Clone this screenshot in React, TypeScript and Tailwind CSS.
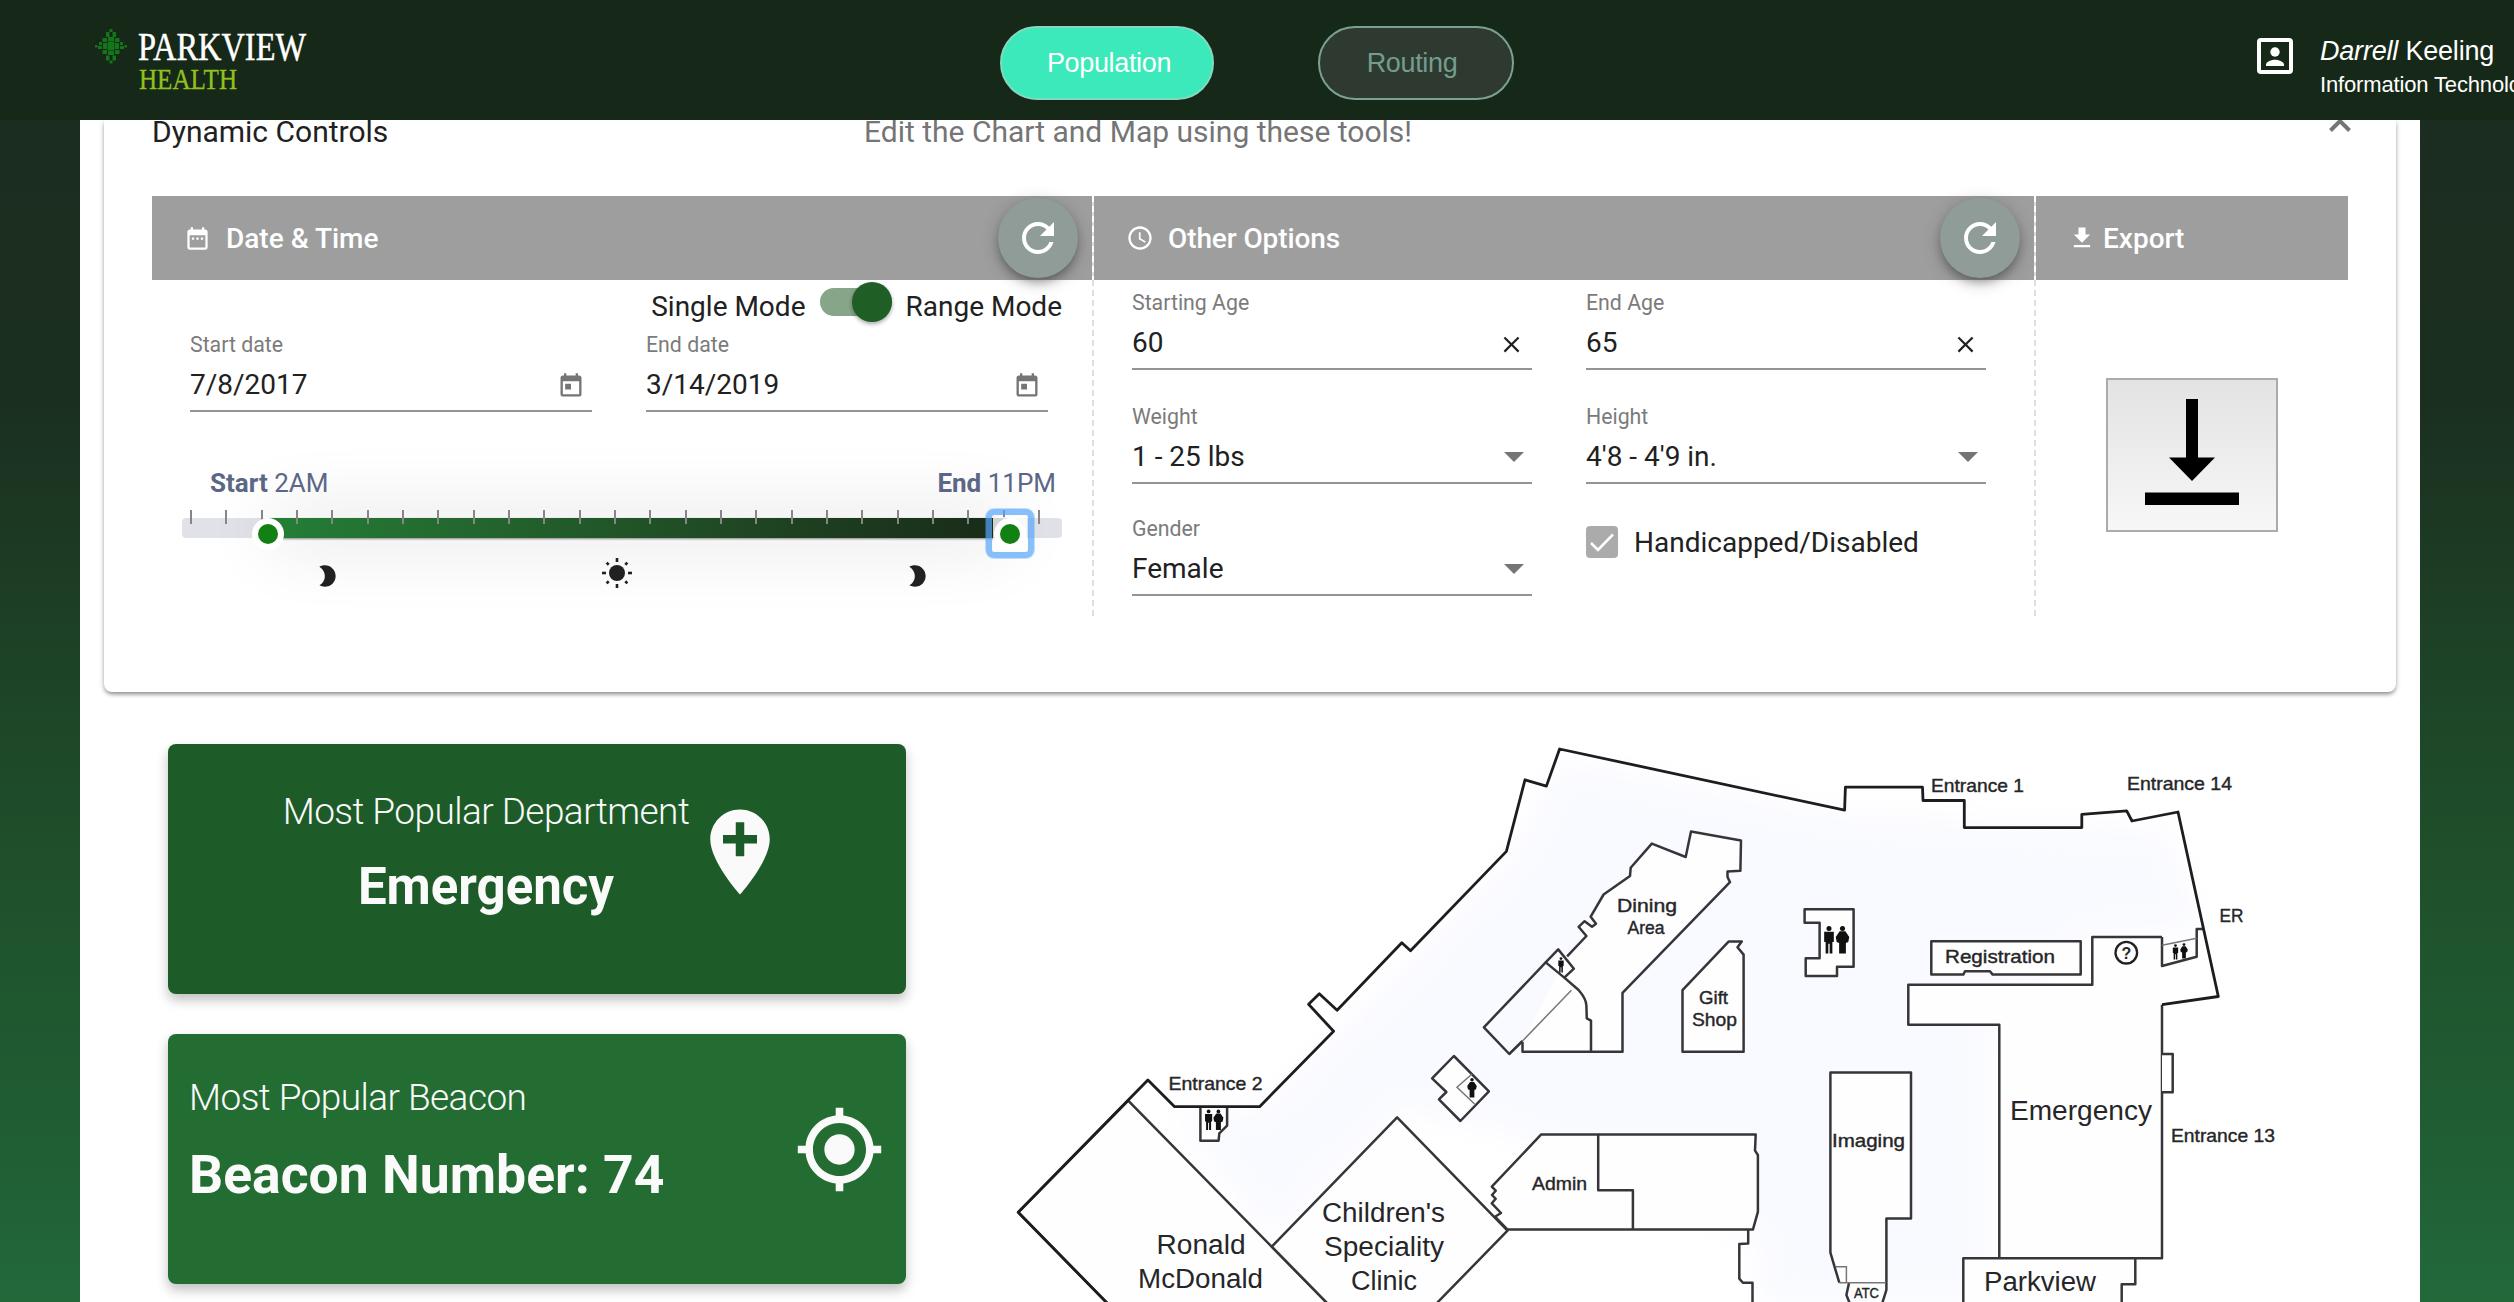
import React from "react";

const ROBOTO = "font-[Roboto,sans-serif]";
const ARIAL = "font-['Liberation_Sans',Arial,sans-serif]";

type IconProps = { d: string; className?: string };
const Icon = ({ d, className }: IconProps) => (
  <svg viewBox="0 0 24 24" fill="currentColor" className={className}>
    <path d={d} />
  </svg>
);

const P = {
  refresh:
    "M17.65 6.35C16.2 4.9 14.21 4 12 4c-4.42 0-7.99 3.58-7.99 8s3.57 8 7.99 8c3.73 0 6.84-2.55 7.73-6h-2.08c-.82 2.33-3.04 4-5.65 4-3.31 0-6-2.69-6-6s2.69-6 6-6c1.66 0 3.14.69 4.22 1.78L13 11h7V4l-2.35 2.35z",
  dateRange:
    "M9 11H7v2h2v-2zm4 0h-2v2h2v-2zm4 0h-2v2h2v-2zm2-7h-1V2h-2v2H8V2H6v2H5c-1.11 0-1.99.9-1.99 2L3 20c0 1.1.89 2 2 2h14c1.1 0 2-.9 2-2V6c0-1.1-.9-2-2-2zm0 16H5V9h14v11z",
  clock:
    "M11.99 2C6.47 2 2 6.48 2 12s4.47 10 9.99 10C17.52 22 22 17.52 22 12S17.52 2 11.99 2zM12 20c-4.42 0-8-3.58-8-8s3.58-8 8-8 8 3.58 8 8-3.58 8-8 8zm.5-13H11v6l5.25 3.15.75-1.23-4.5-2.67z",
  download: "M19 9h-4V3H9v6H5l7 7 7-7zM5 18v2h14v-2H5z",
  today:
    "M19 3h-1V1h-2v2H8V1H6v2H5c-1.11 0-1.99.9-1.99 2L3 19c0 1.1.89 2 2 2h14c1.1 0 2-.9 2-2V5c0-1.1-.9-2-2-2zm0 16H5V8h14v11zM7 10h5v5H7z",
  moon: "M10 2c-1.82 0-3.53.5-5 1.35C7.99 5.08 10 8.3 10 12s-2.01 6.92-5 8.65C6.47 21.5 8.18 22 10 22c5.52 0 10-4.48 10-10S15.52 2 10 2z",
  close:
    "M19 6.41L17.59 5 12 10.59 6.41 5 5 6.41 10.59 12 5 17.59 6.41 19 12 13.41 17.59 19 19 17.59 13.41 12z",
  addLocation:
    "M12 2C8.14 2 5 5.14 5 9c0 5.25 7 13 7 13s7-7.75 7-13c0-3.86-3.14-7-7-7zm4 8h-3v3h-2v-3H8V8h3V5h2v3h3v2z",
  myLocation:
    "M12 8c-2.21 0-4 1.79-4 4s1.79 4 4 4 4-1.79 4-4-1.79-4-4-4zm8.94 3c-.46-4.17-3.77-7.48-7.94-7.94V1h-2v2.06C6.83 3.52 3.52 6.83 3.06 11H1v2h2.06c.46 4.17 3.77 7.48 7.94 7.94V23h2v-2.06c4.17-.46 7.48-3.77 7.94-7.94H23v-2h-2.06zM12 19c-3.87 0-7-3.13-7-7s3.13-7 7-7 7 3.13 7 7-3.13 7-7 7z",
};

const LOGO_TILES: [number, number, number, number][] = [
  [14.5, 0, 3, 3], [11, 3, 3.5, 5], [17.5, 3, 3.5, 5],
  [7.5, 9, 4.5, 4], [13, 8, 6, 4], [20, 9, 4.5, 4],
  [4, 13, 3, 3], [8, 14, 4, 6], [12.5, 12.5, 7, 9], [20, 14, 4, 6], [25, 13, 3, 3],
  [0, 16, 2.5, 2.5], [3, 17, 4, 3], [25, 17, 4, 3], [29.5, 16, 2.5, 2.5],
  [7.5, 21, 4.5, 4], [13, 22, 6, 4], [20, 21, 4.5, 4],
  [11, 26.5, 3.5, 5], [17.5, 26.5, 3.5, 5], [14.5, 31.5, 3, 3],
];

const Logo = () => (
  <svg width="220" height="110" viewBox="95 6 220 110" className="shrink-0">
    <g fill="#14761b" transform="translate(95 29)">
      {LOGO_TILES.map(([x, y, w, h], i) => (
        <rect key={i} x={x} y={y} width={w} height={h} rx="0.6" />
      ))}
    </g>
    <g fontFamily="'Liberation Serif', serif">
      <text x="138" y="60" fontSize="40" fill="#fff" stroke="#fff" strokeWidth="0.5" textLength="168" lengthAdjust="spacingAndGlyphs">PARKVIEW</text>
      <text x="139" y="89" fontSize="29" fill="#93c01f" stroke="#93c01f" strokeWidth="0.3" textLength="98" lengthAdjust="spacingAndGlyphs">HEALTH</text>
    </g>
  </svg>
);

const Header = () => (
  <header className={`relative z-10 flex h-[120px] shrink-0 bg-[#162817] ${ARIAL}`}>
    <div className="w-[1000px] shrink-0 pl-[95px] pt-[6px]">
      <Logo />
    </div>
    <nav className="flex w-[1257px] shrink-0 gap-[104px] pt-[26px] text-[27px] tracking-[-0.35px]">
      <button className="h-[74px] w-[214px] rounded-[37px] border-2 border-[#82d9bf] bg-[#3be9ba] pl-1 text-white">
        Population
      </button>
      <button className="h-[74px] w-[196px] rounded-[37px] border-2 border-[#7aa294] bg-[#2e3a2f] pr-2 text-[#739d8e]">
        Routing
      </button>
    </nav>
    <div className="flex w-[400px] shrink-0 gap-[27px] whitespace-nowrap text-white">
      <svg viewBox="0 0 36 36" className="mt-[38px] size-9 shrink-0">
        <rect x="2" y="2" width="32" height="32" rx="2" fill="none" stroke="#fff" strokeWidth="4" />
        <circle cx="18" cy="14" r="4.7" fill="#fff" />
        <path d="M9 28v-1.500c0-3 6-4.700 9-4.700s9 1.700 9 4.700V28z" fill="#fff" />
      </svg>
      <div className="flex flex-col pt-[34px]">
        <span className="text-[27px] leading-[34px] tracking-[-0.2px]">
          <em>Darrell</em> Keeling
        </span>
        <span className="mt-px text-[22px] leading-[32px] tracking-[-0.15px]">Information Technology</span>
      </div>
    </div>
  </header>
);

const Fab = () => (
  <button className="flex size-20 items-center justify-center rounded-full bg-[#8f9c97] text-white shadow-[0_6px_10px_-2px_rgba(0,0,0,0.3),0_4px_18px_rgba(0,0,0,0.22)]">
    <Icon d={P.refresh} className="size-12" />
  </button>
);

const Divider = () => (
  <div className="absolute inset-y-0 left-0 w-[2px] bg-[repeating-linear-gradient(to_top,#dfdfdf_0_6px,transparent_6px_10px)]" />
);
const DividerTop = () => (
  <div className="absolute left-0 top-0 h-[84px] w-[2px] bg-[repeating-linear-gradient(to_bottom,#fff_0_6px,#ddd_6px_10px)]" />
);

const Field = ({ label, value, children }: { label: string; value: string; children?: React.ReactNode }) => (
  <div className="border-b-2 border-[#949494] pb-[2px]">
    <div className="h-[34px] text-[21.300px] leading-[34px] text-[#7b7b7b]">{label}</div>
    <div className="flex h-[46px] items-center justify-between text-[28px] leading-[46px] text-[#212121]">
      <span>{value}</span>
      {children}
    </div>
  </div>
);

const Caret = () => (
  <svg viewBox="0 0 20 10" className="mr-2 h-[10px] w-5 fill-[#757575]">
    <path d="M0 0h20L10 10z" />
  </svg>
);
const CloseIcon = () => <Icon d={P.close} className="mr-[7px] mt-[2px] size-[27px]" />;
const Today = () => <Icon d={P.today} className="mr-[7px] mt-[2px] size-7 text-[#757575]" />;

const Knob = () => (
  <div className="flex size-8 items-center justify-center rounded-full bg-white">
    <div className="size-5 rounded-full bg-[#128012]" />
  </div>
);

const TICKS = Array.from({ length: 25 }, (_, i) => 8 + Math.round(i * 35.33));

const Slider = () => (
  <div className="mt-[55px]">
    <div className="relative z-10 flex justify-between pl-[28px] pr-[6px] text-[26px] leading-8 text-[#5b6785]">
      <span><b>Start</b> 2AM</span>
      <span><b>End</b> 11PM</span>
    </div>
    <div className="relative mt-[19px] h-5 rounded bg-[#e1e2e8]">
      <div className="absolute left-[86px] top-0 h-5 w-[742px] bg-gradient-to-r from-[#247f36] to-[#182a18] shadow-[0_1px_2px_rgba(0,0,0,0.45),0_0_70px_rgba(0,0,0,0.2)]" />
      {TICKS.map((t) => (
        <div key={t} className="absolute -top-2 h-[14px] w-[2px] bg-[#868686]" style={{ left: t }} />
      ))}
      <div className="absolute left-[70px] top-0">
        <Knob />
      </div>
      <div className="absolute left-[812px] top-0">
        <div className="absolute left-[-1px] top-[-1px] h-[33px] w-[34px] bg-white/80" />
        <div className="relative"><Knob /></div>
        <div className="absolute left-[-8px] top-[-9px] h-[49px] w-12 rounded-lg border-[6px] border-[#55a5fa]/70 shadow-[0_0_0_1px_rgba(85,165,250,0.35)]" />
      </div>
    </div>
    <div className="relative flex items-center pl-[132px] pt-[19px] text-[#212121]">
      <Icon d={P.moon} className="mt-[6px] size-[26px]" />
      <svg viewBox="-16 -16 32 32" className="ml-[261px] size-8">
        <circle r="8" fill="#212121" />
        {[0, 45, 90, 135, 180, 225, 270, 315].map((a) => (
          <rect key={a} x="-1.3" y={a % 90 ? -14.7 : -15} width="2.6" height={a % 90 ? 3 : 4} fill="#212121" transform={`rotate(${a})`} />
        ))}
      </svg>
      <Icon d={P.moon} className="ml-[271px] mt-[6px] size-[26px]" />
    </div>
  </div>
);

const ControlsCard = () => (
  <section className="h-[572px] shrink-0 rounded-b-lg bg-white px-12 shadow-[0_3px_4px_-1px_rgba(0,0,0,0.4),0_1px_6px_rgba(0,0,0,0.16)]">
    <div className="relative -mt-[3px] flex h-[79px] text-[30px] leading-[30px]">
      <span className="w-[712px] text-[#212121]">Dynamic Controls</span>
      <span className="text-[#757575]">Edit the Chart and Map using these tools!</span>
      <svg viewBox="0 0 24 16" className="ml-auto mr-[-4px] h-4 w-6 fill-none stroke-[#757575] stroke-[4]">
        <path d="M2.500 13.500L12 4l9.500 9.500" />
      </svg>
    </div>
    <div className="flex h-[420px] text-[28px] text-[#212121]">
      <div className="w-[940px]">
        <div className="flex h-[84px] items-center bg-[#9e9e9e] pl-8 pr-[14px] font-medium text-white">
          <Icon d={P.dateRange} className="mr-[15px] size-[27px]" />
          <span className="flex-1 pt-px">Date &amp; Time</span>
          <Fab />
        </div>
        <div className="pl-[30px] pr-[30px]">
          <div className="flex h-12 items-center justify-end gap-[14px]">
            <span className="pt-[6px]">Single Mode</span>
            <div className="pb-1 pl-px">
              <div className="relative my-[6px] h-7 w-[72px] rounded-full bg-[#87a588]">
                <div className="absolute -top-[6px] right-0 size-10 rounded-full bg-[#1f5e24] shadow-[0_2px_4px_rgba(0,0,0,0.35)]" />
              </div>
            </div>
            <span className="-ml-px pt-[6px]">Range Mode</span>
          </div>
          <div className="grid grid-cols-2 gap-[54px] pl-2 pr-[14px]">
            <Field label="Start date" value="7/8/2017"><Today /></Field>
            <Field label="End date" value="3/14/2019"><Today /></Field>
          </div>
          <Slider />
        </div>
      </div>
      <div className="relative w-[942px]">
        <div className="flex h-[84px] items-center bg-[#9e9e9e] pl-[34px] pr-[14px] font-medium text-white">
          <Icon d={P.clock} className="mr-[14px] size-7" />
          <span className="flex-1 pt-px tracking-[-0.1px]">Other Options</span>
          <Fab />
        </div>
        <Divider />
        <DividerTop />
        <div className="grid grid-cols-2 gap-x-[54px] pl-10 pr-12 pt-[6px]">
          <Field label="Starting Age" value="60"><CloseIcon /></Field>
          <Field label="End Age" value="65"><CloseIcon /></Field>
          <div className="mt-[30px]"><Field label="Weight" value="1 - 25 lbs"><Caret /></Field></div>
          <div className="mt-[30px]"><Field label="Height" value="4'8 - 4'9 in."><Caret /></Field></div>
          <div className="mt-7"><Field label="Gender" value="Female"><Caret /></Field></div>
          <label className="mt-[42px] flex h-8 items-center gap-4">
            <svg viewBox="0 0 32 32" className="size-8">
              <rect width="32" height="32" rx="4" fill="#ababab" />
              <path d="M5 17l7 7L27 8.500" fill="none" stroke="#fff" strokeWidth="2.6" />
            </svg>
            <span className="pt-px">Handicapped/Disabled</span>
          </label>
        </div>
      </div>
      <div className="relative w-[314px]">
        <div className="flex h-[84px] items-center bg-[#9e9e9e] pl-[34px] font-medium text-white">
          <Icon d={P.download} className="mr-[7px] size-7" />
          <span className="pt-px">Export</span>
        </div>
        <Divider />
        <DividerTop />
        <button className="ml-[72px] mt-[98px] block h-[154px] w-[172px] border-2 border-[#ababab] bg-gradient-to-b from-[#e3e3e3] to-[#f7f7f7]">
          <svg viewBox="2108 380 168 150" className="h-[150px] w-[168px]">
            <path d="M2186 399h12v58.500h17L2192 481l-23-23.500h17zM2145 492.500h94V505h-94z" />
          </svg>
        </button>
      </div>
    </div>
  </section>
);

const Person = ({ x, y, h, wide }: { x: number; y: number; h: number; wide?: boolean }) => (
  <g transform={`translate(${x} ${y}) scale(${h / 28})`} fill="#111">
    <circle cy="-12" r="2.600" />
    {wide ? (
      <path d="M-3-9h6l4 6-1 5-2.500 1V14h-7V3L-6 2l-1-5z" />
    ) : (
      <path d="M-5-8.500h10V2H3.500v12h-2.800V4h-1.400v10h-2.800V2H-5z" />
    )}
  </g>
);

const ROOMS = [
  "M1541 1134.600H1755.700L1755 1150.600 1757.900 1155V1211.800L1752.900 1229.600H1507.500L1495 1216.700 1501 1213 1491.800 1203.300 1495.700 1198.800 1492 1195 1495.700 1190.700 1491.800 1186.600Z",
  "M1598.200 1134.600V1190.300H1632.900V1229.600",
  "M1748.200 1229.600V1243.400L1739.300 1244V1278.600L1742.900 1282.700H1752.500V1306",
  "M1522.500 1042V1051.800H1622.500V992.800L1730 882.200 1727.500 877V871.400L1740.400 870.700 1741 840.600 1691 831.400 1685.700 857 1651.800 843.600 1630.700 867.700 1630 875.900 1603.600 894.500 1590.700 916.700 1596 923.800 1592 926.800 1584.600 921.200 1578.600 926.800 1586.400 936 1567.100 956.400",
  "M1558.200 949.400L1573.900 968.700 1564.300 977.600 1545.700 962.400Z",
  "M1545.700 962.400L1483.900 1027.300 1509.300 1054 1522.500 1041M1564.300 977.600L1578.600 990Q1586.400 999 1586.400 1005.800L1586.800 1018.400 1591 1020.700V1051.800",
  "M1728.600 941.600H1741.800L1737.500 947.200 1743.600 954.600V1051.800H1682.500V990.200Z",
  "M1804.600 909.300H1853.600V966.800H1837V976H1805.700V958.300H1819.600V922.700H1804.600Z",
  "M1839.300 1282.700L1830.400 1252.700V1072.600H1911V1218.500H1886.400V1289.800L1882 1304M1849 1283L1846.400 1295 1850 1304",
  "M1931.300 941.200H2080.700V974.600H1992.700L1990 971.300H1965L1963.300 974.600H1931.300Z",
  "M2162 937.100H2092.300V984.700H1908.300V1024.700H1999.300V1258.200H2162V1004.700",
  "M2162 937.100V966L2196.700 956.800V929H2203",
  "M2162 1054H2172.700V1092.300H2162",
  "M1963.300 1306V1258.200H2135.300V1284.200H2121.700V1306",
  "M1453.900 1056L1488.900 1091.300 1460.400 1121 1438.900 1099.300 1446.400 1092 1432.100 1078.300Z",
  "M1200.400 1107V1140.700H1218.600L1219.300 1133.300 1227.100 1125.700V1107",
  "M1018.200 1212.300L1128.200 1100.700 1330 1306H1110Z",
  "M1271.800 1246.700L1397.100 1117.300 1507.500 1230.700 1434 1306H1330Z",
];

const OUTLINE =
  "M1110 1306L1018.200 1212.300 1147.900 1080 1174.600 1106.700H1259.600L1333.600 1031.300 1308.600 1004.300 1319.300 993.700 1337.100 1010.300 1401.800 942.700 1410.500 950.700 1506.400 851.400 1525 779.800 1546.400 786.100 1559.600 749 1844.600 810.200 1845.400 787.200H1922.500L1923 800.500H1964.300V827.600H2081.800V814.300L2126.700 810.900 2132 821 2178 812 2218.300 996.500 2162 1004.700";

// label, x, baseline, width, size
const LABELS: [string, number, number, number, number][] = [
  ["Entrance 1", 1931, 791.6, 93, 18.5],
  ["Entrance 14", 2127, 790, 105, 18.5],
  ["ER", 2219.5, 921.6, 24, 18.5],
  ["Registration", 1945, 963, 110, 18.5],
  ["Emergency", 2010, 1120, 142, 27],
  ["Entrance 13", 2171, 1142, 104, 18.5],
  ["Parkview", 1984, 1291, 112, 27],
  ["Dining", 1617, 912.3, 60, 18.5],
  ["Area", 1627.5, 934, 37, 18.5],
  ["Gift", 1699, 1003.5, 29, 18.5],
  ["Shop", 1692, 1025.5, 45, 18.5],
  ["Imaging", 1832, 1147, 73, 18.5],
  ["Admin", 1532, 1190, 55, 18.5],
  ["ATC", 1854, 1298, 25, 14],
  ["Entrance 2", 1168.5, 1090, 94, 18.5],
  ["Ronald", 1156.5, 1254, 89, 27],
  ["McDonald", 1138, 1288, 125, 27],
  ["Children's", 1322, 1222, 123, 27],
  ["Speciality", 1324, 1256, 120, 27],
  ["Clinic", 1351, 1290, 66, 27],
];

const FloorMap = () => (
  <svg viewBox="980 692 1416 610" className="h-[610px] w-[1416px] shrink-0">
    <defs>
      <filter id="soft" x="-10%" y="-10%" width="120%" height="120%">
        <feGaussianBlur stdDeviation="16" />
      </filter>
    </defs>
    <path
      d="M1170 1110H1262L1510 860 1560 760 1850 815 2170 830 2200 930 2090 935 1990 1030V1306H1890L1760 1306V1240L1500 1130 1400 1110 1272 1240Z"
      fill="#f9faff"
      filter="url(#soft)"
    />
    <g fill="#fefefe" stroke="#36363a" strokeWidth="2.5" strokeLinejoin="round">
      {ROOMS.map((d, i) => (
        <path key={i} d={d} fill={[1, 2, 5, 11].includes(i) ? "none" : undefined} />
      ))}
    </g>
    <path d={OUTLINE} fill="none" stroke="#1d1d20" strokeWidth="2.8" strokeLinejoin="round" />
    <g fill="none" stroke="#77777a" strokeWidth="1.5">
      <path d="M1522.500 1041L1571.400 990.200M1472 1074L1457 1087.300 1474.600 1104" />
      <path d="M1835.700 1266.800H1846.400V1282.700M1839.300 1282.700H1886M2162 945.300L2196.700 938.300" />
    </g>
    <circle cx="2126.300" cy="952.700" r="10.800" fill="none" stroke="#222" strokeWidth="2.3" />
    <Person x={1208.6} y={1120} h={20} />
    <Person x={1218.4} y={1120} h={20} wide />
    <Person x={1472} y={1088} h={19} wide />
    <Person x={1561} y={965} h={15} />
    <Person x={1829} y={940} h={27} />
    <Person x={1842.5} y={940} h={27} wide />
    <Person x={2175.5} y={952} h={15} />
    <Person x={2184} y={951} h={15} wide />
    <g fontFamily="'Liberation Sans', Arial, sans-serif" fill="#262628">
      <text x="2126.300" y="958.500" fontSize="16" textAnchor="middle" fontWeight="bold">?</text>
      {LABELS.map(([t, x, y, w, s]) => (
        <text
          key={t}
          x={x}
          y={y}
          fontSize={s}
          textLength={w}
          lengthAdjust="spacingAndGlyphs"
          stroke="#262628"
          strokeWidth={s < 20 ? 0.4 : 0}
        >
          {t}
        </text>
      ))}
    </g>
  </svg>
);

const Stats = () => (
  <div className="flex w-[738px] shrink-0 flex-col gap-10 pt-[52px] text-[#fafafa]">
    <div className="flex h-[250px] justify-center rounded-lg bg-[#1d5c28] shadow-[0_6px_12px_rgba(0,0,0,0.25)]">
      <div className="flex flex-col items-center pt-[44px]">
        <span className="text-[37px] font-light leading-[48px] tracking-[-0.56px]">Most Popular Department</span>
        <span className="mt-4 text-[51px] font-bold leading-[70px]">Emergency</span>
      </div>
      <Icon d={P.addLocation} className="mt-[57px] size-[102px]" />
    </div>
    <div className="flex h-[250px] justify-between rounded-lg bg-[#236d32] pl-[21px] pr-[21px] shadow-[0_6px_12px_rgba(0,0,0,0.25)]">
      <div className="flex flex-col pt-[40px]">
        <span className="text-[37px] font-light leading-[48px] tracking-[-0.56px]">Most Popular Beacon</span>
        <span className="mt-[18px] text-[53.500px] font-bold leading-[70px]">Beacon Number: 74</span>
      </div>
      <Icon d={P.myLocation} className="mt-[70px] size-[91px]" />
    </div>
  </div>
);

export default function App() {
  return (
    <div className={`flex h-[1302px] w-[2514px] flex-col overflow-hidden bg-[linear-gradient(to_bottom,#1b2d20_120px,#1b2f20_400px,#1d4126_640px,#1f522c_900px,#205e34_1150px,#22693a_1302px)] ${ROBOTO}`}>
      <Header />
      <main className="mx-20 mr-[94px] flex h-[1182px] flex-col bg-white px-6">
        <ControlsCard />
        <div className="flex h-[610px] shrink-0 pl-16">
          <Stats />
          <div className="-mr-6 ml-[74px] overflow-hidden">
            <FloorMap />
          </div>
        </div>
      </main>
    </div>
  );
}
